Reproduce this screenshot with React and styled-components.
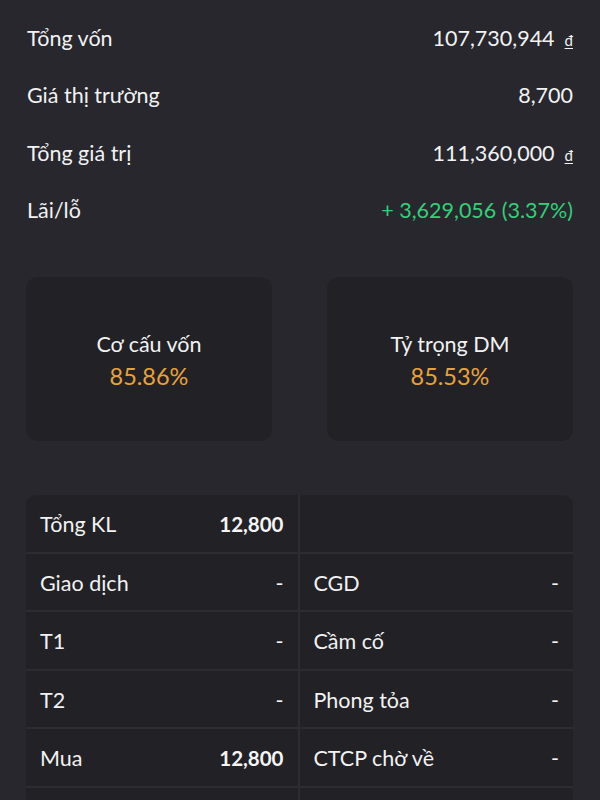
import React from "react";
import styled, { createGlobalStyle } from "styled-components";

const Global = createGlobalStyle`
  html, body { margin: 0; padding: 0; background: #27272d; }
  body { font-family: Lato, "Open Sans", "Noto Sans", sans-serif; color: #f2f2f2; }
  * { box-sizing: border-box; }
`;

const Page = styled.div`
  width: 600px;
  height: 800px;
  overflow: hidden;
  background: #27272d;
  padding: 9px 27px 0 27px;
`;

const Summary = styled.div`
  display: flex;
  flex-direction: column;
`;

const SummaryRow = styled.div`
  height: 57.5px;
  display: flex;
  align-items: center;
  justify-content: space-between;
  font-size: 21.5px;
`;

const Label = styled.span`
  color: #f2f2f2;
`;

const Value = styled.span`
  color: ${(p) => (p.$tone === "up" ? "#33d07a" : "#f2f2f2")};
  display: flex;
  align-items: baseline;
  gap: 10px;
`;

const Currency = styled.span`
  font-size: 15px;
  text-decoration: underline;
  text-underline-offset: 2px;
`;

const Cards = styled.div`
  display: grid;
  grid-template-columns: 1fr 1fr;
  gap: 55px;
  margin-top: 38px;
  margin-left: -1px;
`;

const Card = styled.div`
  height: 164px;
  border-radius: 12px;
  background: #212126;
  display: flex;
  flex-direction: column;
  align-items: center;
  justify-content: center;
  gap: 4px;
  padding-top: 4px;
  font-size: 21.5px;
  line-height: 1.2;
`;

const CardValue = styled.div`
  color: #e9a23b;
  font-size: 23.5px;
`;

const Table = styled.div`
  margin-top: 54px;
  margin-left: -1px;
  border-radius: 10px 10px 0 0;
  overflow: hidden;
  background: #212126;
  display: grid;
  grid-template-columns: 1fr 1fr;
`;

const Cell = styled.div`
  height: 58.5px;
  display: flex;
  align-items: center;
  justify-content: space-between;
  padding: 2px 14px 0 14px;
  font-size: 21.5px;
  border-bottom: 2px solid #2c2c31;
  border-right: ${(p) => (p.$left ? "2px solid #2c2c31" : "none")};
`;

const CellValue = styled.span`
  font-weight: ${(p) => (p.$bold ? 700 : 400)};
  font-size: ${(p) => (p.$bold ? "20.5px" : "21.5px")};
  color: #f5f5f5;
`;

const summary = [
  { label: "Tổng vốn", value: "107,730,944", cur: true },
  { label: "Giá thị trường", value: "8,700" },
  { label: "Tổng giá trị", value: "111,360,000", cur: true },
  { label: "Lãi/lỗ", value: "+ 3,629,056 (3.37%)", tone: "up" },
];

const rows = [
  [["Tổng KL", "12,800", true], null],
  [["Giao dịch", "-"], ["CGD", "-"]],
  [["T1", "-"], ["Cầm cố", "-"]],
  [["T2", "-"], ["Phong tỏa", "-"]],
  [["Mua", "12,800", true], ["CTCP chờ về", "-"]],
  [["", ""], ["", ""]],
];

export default function App() {
  return (
    <>
      <Global />
      <Page>
        <Summary>
          {summary.map((s) => (
            <SummaryRow key={s.label}>
              <Label>{s.label}</Label>
              <Value $tone={s.tone}>
                {s.value}
                {s.cur && <Currency>đ</Currency>}
              </Value>
            </SummaryRow>
          ))}
        </Summary>
        <Cards>
          <Card>
            <div>Cơ cấu vốn</div>
            <CardValue>85.86%</CardValue>
          </Card>
          <Card>
            <div>Tỷ trọng DM</div>
            <CardValue>85.53%</CardValue>
          </Card>
        </Cards>
        <Table>
          {rows.map((r, i) => (
            <React.Fragment key={i}>
              <Cell $left>
                {r[0] && (
                  <>
                    <Label>{r[0][0]}</Label>
                    <CellValue $bold={r[0][2]}>{r[0][1]}</CellValue>
                  </>
                )}
              </Cell>
              <Cell>
                {r[1] && (
                  <>
                    <Label>{r[1][0]}</Label>
                    <CellValue $bold={r[1][2]}>{r[1][1]}</CellValue>
                  </>
                )}
              </Cell>
            </React.Fragment>
          ))}
        </Table>
      </Page>
    </>
  );
}
